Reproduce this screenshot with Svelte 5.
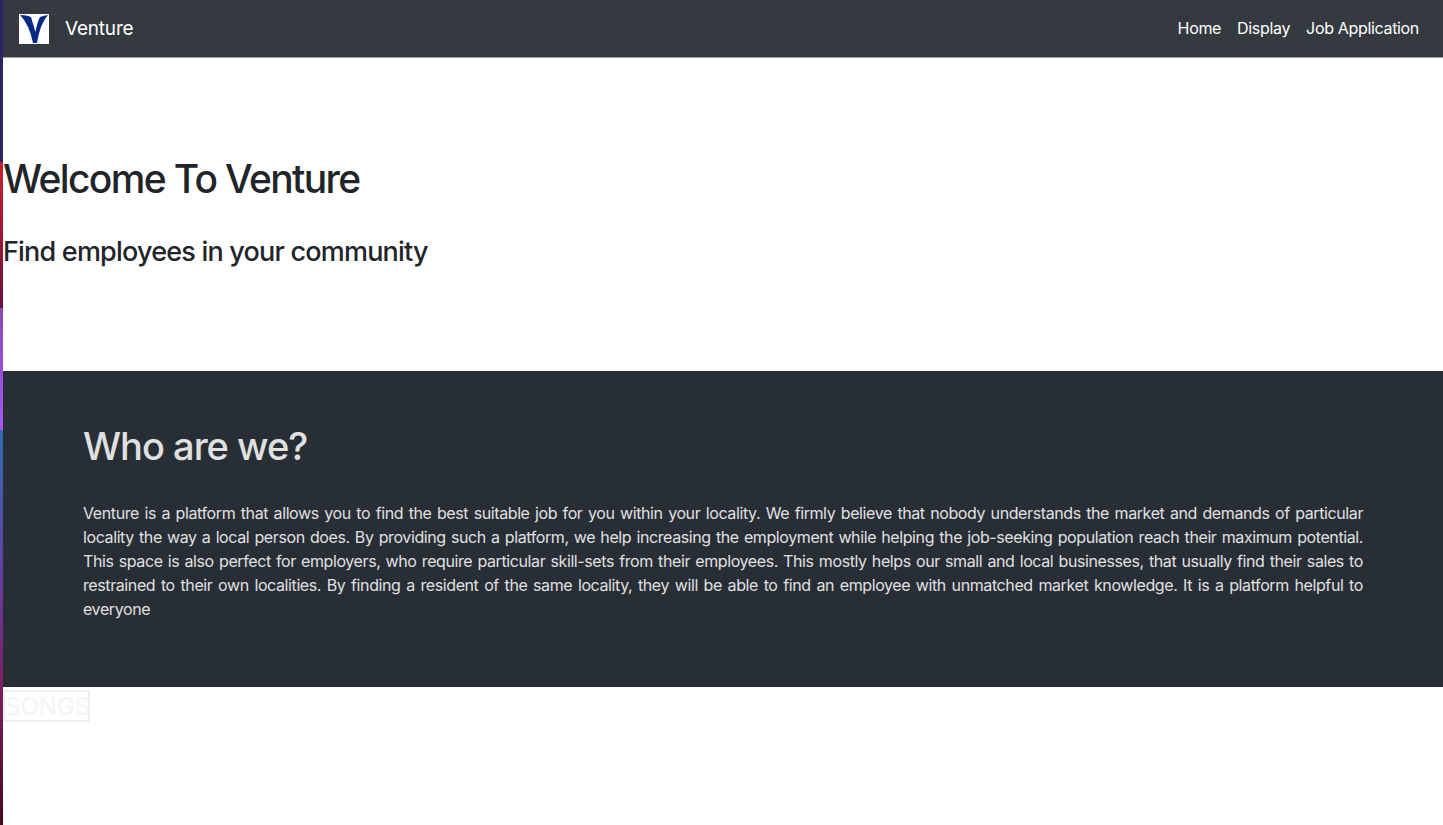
<script lang="ts">
  const links = ['Home', 'Display', 'Job Application']
</script>

<div class="rail" aria-hidden="true">
  <div class="seg indigo"></div>
  <div class="seg red"></div>
  <div class="seg violet"></div>
  <div class="seg blue"></div>
</div>

<nav class="navbar">
  <a class="brand" href="#top">
    <svg class="logo" width="30" height="30" viewBox="0 0 30 30">
      <rect width="30" height="30" fill="#fff" />
      <path d="M1 1 Q8 1 12 3 Q14 10 16.5 18 Q18 9 21 3 Q25 1.5 29 1 Q21 10 18 29 L14 29 Q10 10 1 1 Z" fill="#062a85" />
    </svg>
    <span>Venture</span>
  </a>
  <ul class="nav-links">
    {#each links as link}
      <li><a href="#top">{link}</a></li>
    {/each}
  </ul>
</nav>

<header class="hero">
  <h1>Welcome To Venture</h1>
  <h3>Find employees in your community</h3>
</header>

<section class="about">
  <h2>Who are we?</h2>
  <p>Venture is a platform that allows you to find the best suitable job for you within your locality. We firmly believe that nobody understands the market and demands of particular locality the way a local person does. By providing such a platform, we help increasing the employment while helping the job-seeking population reach their maximum potential. This space is also perfect for employers, who require particular skill-sets from their employees. This mostly helps our small and local businesses, that usually find their sales to restrained to their own localities. By finding a resident of the same locality, they will be able to find an employee with unmatched market knowledge. It is a platform helpful to everyone</p>
</section>

<div class="songs">
  <button>SONGS</button>
</div>

<style>
  :global(body) {
    margin: 0;
    background: #fff;
    color: #212529;
    font-family: Inter, "Noto Sans", sans-serif;
  }

  .rail {
    position: fixed;
    left: 0;
    top: 0;
    width: 3px;
    height: 825px;
    display: flex;
    flex-direction: column;
    z-index: 2;
  }

  .seg { width: 100%; }
  .indigo { height: 162px; background: #2a2566; }
  .red { height: 146px; background: linear-gradient(#c8202f, #6d0f3c); }
  .violet { height: 122px; background: linear-gradient(#8a49b5, #a855f0); }
  .blue { height: 395px; background: linear-gradient(#2f6fb0, #6a3a9e 40%, #7d1f5f 65%, #4a0520); }

  .navbar {
    display: flex;
    justify-content: space-between;
    align-items: center;
    height: 57px;
    padding: 0 16px 0 19px;
    background: #343a40;
    border-bottom: 1px solid #9a9da0;
  }

  .brand {
    display: flex;
    align-items: center;
    gap: 16px;
    color: #fff;
    font-size: 19px;
    letter-spacing: -0.2px;
    text-decoration: none;
  }

  .nav-links {
    display: flex;
    gap: 16px;
    margin: 0;
    padding: 0 8px 2px 0;
    list-style: none;
  }

  .nav-links a {
    color: #fff;
    font-size: 16px;
    letter-spacing: -0.33px;
    text-decoration: none;
  }

  .hero {
    height: 313px;
    padding-left: 3px;
    box-sizing: border-box;
    overflow: hidden;
  }

  .hero h1 {
    margin: 97px 0 0;
    font-size: 39px;
    font-weight: 500;
    line-height: 48px;
    letter-spacing: -1.65px;
  }

  .hero h3 {
    margin: 33px 0 0;
    font-size: 27px;
    font-weight: 500;
    line-height: 32px;
    letter-spacing: -0.8px;
  }

  .about {
    height: 316px;
    box-sizing: border-box;
    padding: 51px 80px 0 83px;
    background: #282e35;
    color: #e0e0e0;
  }

  .about h2 {
    margin: 0;
    font-size: 38px;
    font-weight: 500;
    line-height: 48px;
    letter-spacing: -1px;
  }

  .about p {
    margin: 31px 0 0;
    font-size: 16px;
    line-height: 24px;
    letter-spacing: -0.4px;
    text-align: justify;
  }

  .songs {
    padding: 3px 0 0 3px;
    height: 135px;
    box-sizing: border-box;
  }

  .songs button {
    display: block;
    width: 87px;
    height: 32px;
    padding: 0;
    background: #fff;
    border: 2px solid #eceef2;
    color: #f4f4f6;
    font-family: inherit;
    font-size: 24px;
  }
</style>
